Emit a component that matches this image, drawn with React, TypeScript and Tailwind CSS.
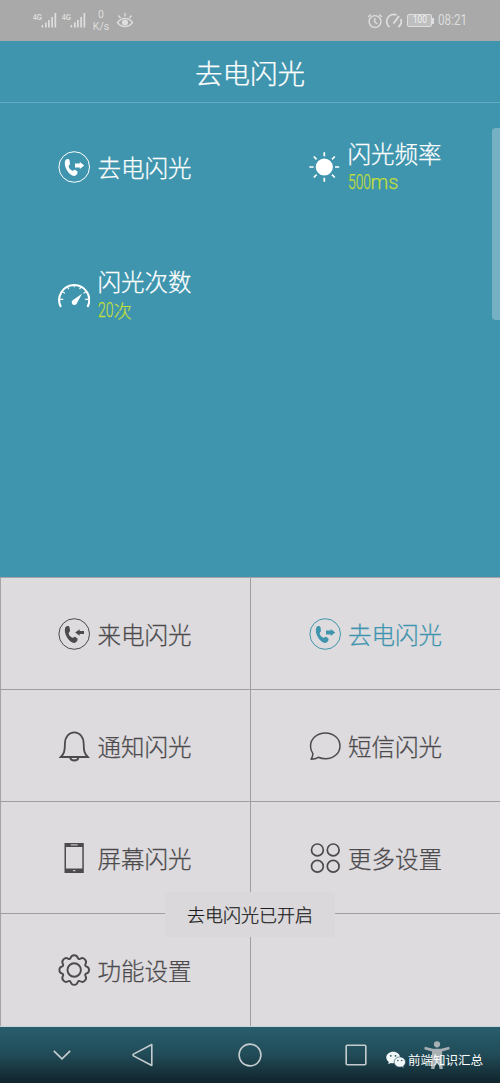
import type { ReactNode } from "react";
import clsx from "clsx";

const Handset = () => (
  <path
    d="M7.300 9.600C8.200 7.700 11 7.600 11.500 9.300L12 12.700C12.100 14 10.200 14.300 10.700 15.800C11.400 17.800 12.600 19.200 14.400 19.700C15.600 20 15.700 18.400 17 18.700L19.200 20.300C20.400 21.600 18.700 24.900 16.200 25C11 24.900 5 15.200 7.300 9.600Z"
    fill="currentColor"
  />
);

function OutgoingIcon() {
  return (
    <svg viewBox="0 0 32 32" className="h-8 w-8">
      <circle cx="16.200" cy="16" r="15.300" fill="none" stroke="currentColor" strokeWidth="1" />
      <Handset />
      <path d="M17 12.600h4.800v-1.600L26.200 14.500l-4.400 3.500v-1.600H17z" fill="currentColor" />
    </svg>
  );
}

function IncomingIcon() {
  return (
    <svg viewBox="0 0 32 32" className="h-8 w-8">
      <circle cx="16.200" cy="16" r="15.300" fill="none" stroke="currentColor" strokeWidth="1" />
      <Handset />
      <path d="M26 12.900h-4.400v-1.700L17.200 14.500l4.400 3.300v-1.700H26z" fill="currentColor" />
    </svg>
  );
}

function SunIcon() {
  return (
    <svg viewBox="0 0 32 32" className="h-8 w-8">
      <circle cx="16.300" cy="16" r="8.600" fill="currentColor" />
      <path
        d="M16.300 1.200v4M16.300 26.800v4M1.400 16h4.200M27 16h4.200M5.800 5.500l2.800 2.800M24 23.700l2.800 2.800M26.800 5.500L24 8.300M8.600 23.700l-2.800 2.800"
        stroke="currentColor"
        strokeWidth="1.700"
      />
    </svg>
  );
}

function GaugeIcon() {
  return (
    <svg viewBox="0 0 32 32" className="h-8 w-8">
      <path d="M2.900 27.900A15 15 0 1 1 29.500 27.900" fill="none" stroke="currentColor" strokeWidth="2.100" />
      <path
        d="M16.200 5v3.300M9.300 7.500l1.500 2.600M23.100 7.500l-1.500 2.600M4.300 12.700l2.600 1.500M28.100 12.700l-2.600 1.500M2.200 20.300h3M30.200 20.300h-3"
        stroke="currentColor"
        strokeWidth="1.200"
      />
      <path d="M24 14.700l-5 9.200a2.700 2.700 0 1 1-4-3z" fill="currentColor" />
    </svg>
  );
}

function BellIcon() {
  return (
    <svg viewBox="0 0 32 32" fill="none" className="h-8 w-8">
      <path
        d="M2.800 27c3.300-3.300 4.100-6 4.100-13C6.900 7 11 2.300 16.300 2.300S25.700 7 25.700 14c0 7 .8 9.700 4.100 13z"
        stroke="currentColor"
        strokeWidth="1.800"
      />
      <path d="M12.200 27.500c.6 4 7.600 4 8.200 0" stroke="currentColor" strokeWidth="1.800" />
    </svg>
  );
}

function BubbleIcon() {
  return (
    <svg viewBox="0 0 32 32" fill="none" className="h-8 w-8">
      <path
        d="M16.400 2.900c8.300 0 14.600 5.800 14.600 13s-6.300 12.900-14.600 12.900c-2.600 0-5-.6-7.100-1.500-1.700 1.200-4.400 1.900-7.200 2 1.200-1.700 1.800-3.500 1.800-5.700C2.300 21.400 1.500 18.700 1.500 15.900c0-7.200 6.600-13 14.900-13z"
        stroke="currentColor"
        strokeWidth="1.500"
        strokeLinejoin="round"
      />
    </svg>
  );
}

function ScreenIcon() {
  return (
    <svg viewBox="0 0 32 32" fill="none" className="h-8 w-8">
      <path fillRule="evenodd" d="M6.500 1h19.300v30H6.500zM8 5v21.500h16.300V5z" fill="currentColor" />
      <path d="M12.700 2.900h7M15 28.700h2.500" stroke="#dddbde" strokeWidth="1" />
    </svg>
  );
}

function MoreIcon() {
  return (
    <svg viewBox="0 0 32 32" fill="none" stroke="currentColor" strokeWidth="1.700" className="h-8 w-8">
      <circle cx="8.400" cy="7.900" r="5.900" />
      <circle cx="24.200" cy="7.900" r="5.900" />
      <circle cx="8.400" cy="24.200" r="5.900" />
      <circle cx="24.200" cy="24.200" r="5.900" />
    </svg>
  );
}

function GearIcon() {
  return (
    <svg viewBox="0 0 32 32" fill="none" stroke="currentColor" strokeWidth="1.900" className="h-8 w-8">
      <path
        d="M12.600 4.100C13.400 .2 19 .2 19.800 4.100C20.400 5.100 21.300 5.300 22.200 4.700C25.600 2.700 29.500 6.600 27.500 10C26.900 10.900 27.100 11.800 28.100 12.400C32 13.200 32 18.800 28.100 19.600C27.100 20.200 26.900 21.100 27.500 22C29.500 25.400 25.600 29.300 22.200 27.300C21.300 26.700 20.400 26.900 19.800 27.900C19 31.800 13.400 31.800 12.600 27.900C12 26.900 11.100 26.700 10.200 27.300C6.800 29.300 2.900 25.400 4.900 22C5.500 21.100 5.300 20.200 4.300 19.600C.4 18.800 .4 13.200 4.300 12.400C5.300 11.800 5.500 10.900 4.900 10C2.900 6.600 6.800 2.700 10.200 4.700C11.100 5.300 12 5.100 12.600 4.100Z"
        strokeLinejoin="round"
      />
      <circle cx="16.200" cy="16" r="6.700" />
    </svg>
  );
}

function Signal() {
  return (
    <svg viewBox="0 0 25 18" className="h-[18px] w-[25px]" fill="#dedede">
      <text x="0" y="7.500" fontSize="9" fontWeight="700" textLength="9" lengthAdjust="spacingAndGlyphs" fontFamily="Liberation Sans, sans-serif">
        4G
      </text>
      <path d="M8.500 13h1.700v2.500H8.500zM12 10.500h1.700v5H12zM15 8h1.700v7.500H15zM18.300 5H20v10.500h-1.700zM21.500 1h1.700v14.500h-1.700z" />
    </svg>
  );
}

function StatusBar() {
  return (
    <div className="flex h-[41px] items-center justify-between bg-[#a9a9a9] pr-[32px] pl-[33px] text-[#dedede]">
      <div className="flex items-center">
        <div className="flex gap-[4px]">
          <Signal />
          <Signal />
        </div>
        <div className="ml-[5px] flex w-[18px] flex-col items-center font-['Roboto',sans-serif] text-[10.500px] leading-[12px] font-normal">
          <span>0</span>
          <span>K/s</span>
        </div>
        <svg viewBox="0 0 18 16" fill="none" stroke="currentColor" strokeWidth="1.300" className="ml-[6px] h-4 w-[18px]">
          <path d="M1.500 9.500c4-5.500 11-5.500 15 0-4 5.500-11 5.500-15 0zM9 0v3.500M2.500 2.500l2 2.500M15.500 2.500l-2 2.500" />
          <circle cx="9" cy="9.500" r="2.400" fill="currentColor" />
        </svg>
      </div>

      <div className="flex items-center">
        <svg viewBox="0 0 16 16" fill="none" stroke="currentColor" strokeWidth="1.400" className="mr-[2px] h-4 w-4">
          <circle cx="8" cy="8.500" r="5.900" />
          <path d="M7.800 5v4l2.500 2M1.200 4l2.600-2.500M14.800 4l-2.600-2.500" />
        </svg>
        <svg viewBox="0 0 18 16" fill="none" stroke="currentColor" strokeWidth="1.700" className="h-4 w-[18px]">
          <path d="M4.500 14A7 7 0 0 1 11.500 2M15.800 6a7 7 0 0 1-2.500 8" />
          <path d="M8.500 10.500L14 3" strokeWidth="2" />
        </svg>
        <div className="ml-[4px] flex h-[13px] w-[25px] items-center justify-center rounded-[2px] border border-[#dedede] bg-[#bebebe] font-['Roboto',sans-serif] text-[10.500px] leading-none font-normal text-[#f0f0f0]">
          <span className="inline-block scale-x-[0.780]">100</span>
        </div>
        <div className="h-[6px] w-[2px] bg-[#dedede]" />
        <span className="ml-[4px] w-[30px] font-['Roboto',sans-serif] text-[15px] leading-none font-normal">
          <span className="inline-block origin-left scale-x-[0.780]">08:21</span>
        </span>
      </div>
    </div>
  );
}

function Cell({ icon, label, children }: { icon: ReactNode; label: string; children?: ReactNode }) {
  return (
    <div className="flex h-full items-center gap-[7.500px] pl-[58px]">
      {icon}
      <div>
        <div className="text-[23.500px] leading-[30px] whitespace-nowrap">{label}</div>
        {children}
      </div>
    </div>
  );
}

const menu = [
  { label: "来电闪光", icon: <IncomingIcon /> },
  { label: "去电闪光", icon: <OutgoingIcon />, active: true },
  { label: "通知闪光", icon: <BellIcon /> },
  { label: "短信闪光", icon: <BubbleIcon /> },
  { label: "屏幕闪光", icon: <ScreenIcon /> },
  { label: "更多设置", icon: <MoreIcon /> },
  { label: "功能设置", icon: <GearIcon /> },
];

function WeChatIcon() {
  return (
    <svg viewBox="0 0 20 18" className="h-[18px] w-5">
      <path d="M7.200.8C3.300.8.300 3.300.300 6.600c0 1.800 1 3.400 2.500 4.400l-.6 2.300 2.500-1.300c.8.200 1.600.300 2.500.300 3.900 0 6.900-2.500 6.900-5.700S11.100.8 7.200.8z" fill="#f2f7f7" />
      <path d="M13.800 5.900c-3.200 0-5.700 2.300-5.700 5.100s2.500 5.100 5.700 5.100c.8 0 1.500-.1 2.100-.400l2 1.200-.5-2c1.300-.9 2.100-2.300 2.100-3.900 0-2.800-2.500-5.100-5.700-5.100z" fill="#f2f7f7" stroke="#23505c" strokeWidth="0.600" />
      <g fill="#24505b">
        <circle cx="4.800" cy="4.800" r=".9" />
        <circle cx="9.500" cy="4.800" r=".9" />
        <circle cx="11.900" cy="9.600" r=".75" />
        <circle cx="15.700" cy="9.600" r=".75" />
      </g>
    </svg>
  );
}

function NavBar() {
  return (
    <div className="relative flex h-[57px] items-center border-t border-[#c5d5da] bg-gradient-to-b from-[#285e6e] via-[#214b57] to-[#10242c] pl-[53px] text-[#c5cccf]">
      <svg viewBox="0 0 18 10" fill="none" stroke="currentColor" strokeWidth="1.700" className="h-[10px] w-[18px]">
        <path d="M.8.800L9 8.800 17.200.800" />
      </svg>
      <svg viewBox="0 0 22 24" fill="none" stroke="currentColor" strokeWidth="1.600" className="ml-[61px] h-6 w-[22px]">
        <path d="M19.800 1.500v21L1.500 12.900q-.8-.9 0-1.800z" strokeLinejoin="round" />
      </svg>
      <svg viewBox="0 0 24 24" fill="none" stroke="currentColor" strokeWidth="1.600" className="ml-[84px] h-6 w-6">
        <circle cx="12" cy="12" r="10.900" />
      </svg>
      <svg viewBox="0 0 22 22" fill="none" stroke="currentColor" strokeWidth="1.600" className="ml-[83px] h-[22px] w-[22px]">
        <rect x="1.200" y="1.200" width="19.600" height="19.600" rx="1" />
      </svg>
      <svg viewBox="0 0 26 28" fill="#a9b0b3" className="ml-[57px] h-7 w-[26px]">
        <circle cx="13" cy="3.300" r="3.100" />
        <path d="M.8 5.800l8.200 1.900h8l8.200-1.900.5 2.400-7.700 2.400.8 17.400h-3.200l-1.500-7h-2.200l-1.500 7H7.200L8 10.600.3 8.200z" />
      </svg>
      <div className="absolute top-[24px] left-[386px] flex items-center gap-[2px] text-white">
        <WeChatIcon />
        <span className="text-[12.500px] leading-[18px] font-normal whitespace-nowrap">前端知识汇总</span>
      </div>
    </div>
  );
}

export default function App() {
  return (
    <div className="relative flex h-[1083px] w-[500px] flex-col overflow-hidden bg-[#dddbde] font-['Noto_Sans_CJK_SC',sans-serif] font-light">
      <StatusBar />

      <div className="flex h-[62px] items-center justify-center border-b border-[#62adc3] bg-[#3f95ae] pt-[3px] text-[27.500px] text-white [-webkit-text-stroke:0.25px]">
        去电闪光
      </div>

      <div className="relative h-[474px] bg-[#3f95ae] text-white [-webkit-text-stroke:0.25px]">
        <div className="grid auto-rows-[128px] grid-cols-2">
          <Cell icon={<OutgoingIcon />} label="去电闪光" />
          <Cell icon={<SunIcon />} label="闪光频率">
            <div className="flex h-[28px] items-center font-['Roboto',sans-serif] text-[20px] leading-[28px] text-[#c0de39]">
              <span className="w-[23px]">
                <span className="inline-block origin-left scale-x-[0.690]">500</span>
              </span>
              <span>ms</span>
            </div>
          </Cell>
          <Cell icon={<GaugeIcon />} label="闪光次数">
            <div className="flex h-[28px] items-center text-[18.500px] leading-[28px] text-[#c0de39]">
              <span className="w-[16px] font-['Roboto',sans-serif] text-[20px]">
                <span className="inline-block origin-left scale-x-[0.700]">20</span>
              </span>
              <span>次</span>
            </div>
          </Cell>
        </div>
        <div className="absolute top-[25px] right-0 h-[192px] w-[8px] rounded-l-[4px] bg-[#75b0c3]" />
      </div>

      <div className="grid h-[449px] grid-cols-2 grid-rows-4 border-t border-l border-[#a5a3a6] [-webkit-text-stroke:0.25px]">
        {menu.map((item, i) => (
          <div
            key={item.label}
            className={clsx(
              "border-[#a09ea1]",
              i % 2 === 0 && "-ml-px border-r",
              i < 6 && "border-b",
              item.active ? "text-[#3f95ae]" : "text-[#4c4a4d]",
            )}
          >
            <Cell icon={item.icon} label={item.label} />
          </div>
        ))}
      </div>

      <NavBar />

      <div className="absolute top-[892px] left-[165px] flex h-[45px] w-[170px] items-center justify-center rounded-[2px] bg-[#dad8db] text-[18px] whitespace-nowrap text-[#1c1c1c] [-webkit-text-stroke:0.25px]">
        去电闪光已开启
      </div>
    </div>
  );
}
